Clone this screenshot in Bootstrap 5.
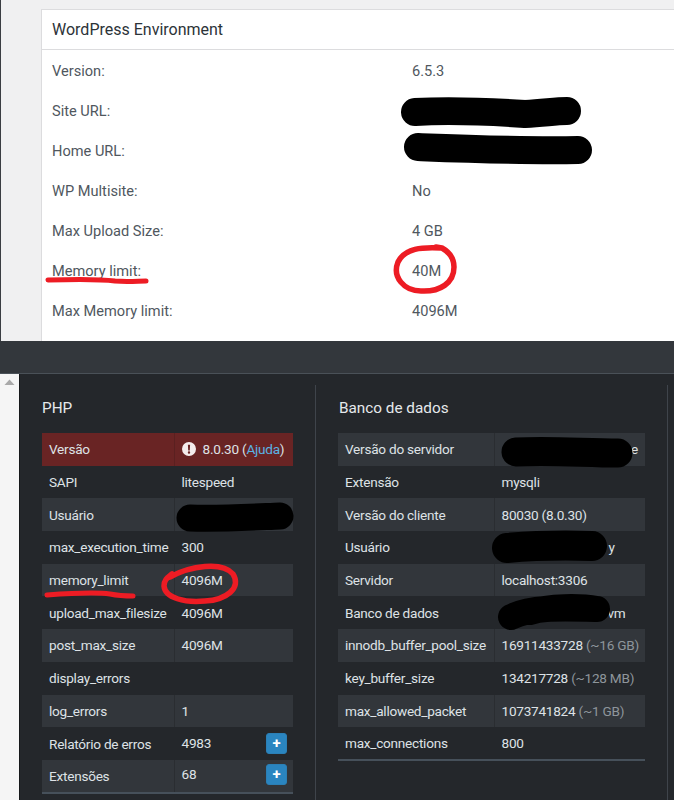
<!DOCTYPE html>
<html lang="pt">
<head>
<meta charset="utf-8">
<title>Environment</title>
<link href="https://cdn.jsdelivr.net/npm/bootstrap@5.3.0/dist/css/bootstrap.min.css" rel="stylesheet">
<style>
html,body{margin:0;height:800px;overflow:hidden;background:#24272b}
body{position:relative;font-family:Roboto,"Open Sans",sans-serif;font-size:14px}
.wp-area{height:341px;background:#f0f0f1;border-left:1px solid #3a3d42;padding:9px 0 0 40px;overflow:hidden}
.wp-box{background:#fff;border:1px solid #dcdcde;border-right:0;height:340px;color:#50575e;font-size:14.6px}
.wp-head{height:40px;border-bottom:1px solid #dcdcde;padding:0 10px;font-size:16px;line-height:39px;color:#2c3338}
.wp-row{height:40px;line-height:40px;padding:1px 0 0 10px}
.wp-key{width:360px}
.gap-band{height:33px;background:#33373c;border-bottom:1px solid #4a5158}
.dark-area{height:426px;background:#24272b;color:#dee2e6}
.scroll-rail{width:20px;background:#f5f5f5;border-right:1px solid #16181a;padding:5px 0 0 4px;line-height:0}
.col-a,.col-b{margin-top:11px;padding-left:22px;height:415px}
.col-a{width:296px;border-right:1px solid #3f444b}
.col-b{width:352px;border-right:1px solid #3f444b}
.sec-title{font-size:15.3px;font-weight:400;line-height:20px;margin:13px 0 15px;color:#e6e9ec}
.col-b .sec-title{padding-left:1px}
.info-table{table-layout:fixed;border-collapse:collapse;color:#dee2e6;font-size:13.6px;letter-spacing:-.25px}
.col-a .info-table{width:251px}
.col-b .info-table{width:307px}
.info-table td{padding:0 7px;height:32.7px;line-height:20px;white-space:nowrap;vertical-align:middle}
.info-table tr:nth-child(odd) td{background:#32363b}
.info-table td:first-child{border-right:1px solid #2a2d31}
.info-table tr:nth-child(even) td:first-child{border-right-color:transparent}
.info-table tr.warn td{background:#692424;border-right-color:#5a2020}
.line-end{border-bottom:2px solid #46505a}
.muted-size{color:#8e959b}
.help-link{color:#5ab4e5;text-decoration:none}
.alert-ico{vertical-align:-2px;margin-right:4px}
.plus-btn{float:right;width:21px;height:21px;padding:0;margin-right:-1px;border:1px solid #2b7fb5;border-radius:3px;background:#2a85c0;color:#fff;font-size:15px;font-weight:700;line-height:18px;text-align:center}
.ink-layer{position:absolute;left:0;top:0;pointer-events:none}
.pad-y{padding-left:114px!important}
.pad-vm{padding-left:113px!important}
.raised-val{display:inline-block;margin-bottom:4px}
</style>
</head>
<body>
<div class="wp-area">
  <div class="wp-box">
    <div class="wp-head">WordPress Environment</div>
    <div class="wp-row d-flex"><div class="wp-key">Version:</div><div>6.5.3</div></div>
    <div class="wp-row d-flex"><div class="wp-key">Site URL:</div><div></div></div>
    <div class="wp-row d-flex"><div class="wp-key">Home URL:</div><div></div></div>
    <div class="wp-row d-flex"><div class="wp-key">WP Multisite:</div><div>No</div></div>
    <div class="wp-row d-flex"><div class="wp-key">Max Upload Size:</div><div>4 GB</div></div>
    <div class="wp-row d-flex"><div class="wp-key">Memory limit:</div><div>40M</div></div>
    <div class="wp-row d-flex"><div class="wp-key">Max Memory limit:</div><div>4096M</div></div>
  </div>
</div>
<div class="gap-band"></div>
<div class="dark-area d-flex">
  <div class="scroll-rail"><svg width="11" height="7" viewBox="0 0 11 7"><path d="M5.5 0.5 L10.5 6 H0.5Z" fill="#a9a9a9"/></svg></div>
  <div class="col-a">
    <h2 class="sec-title">PHP</h2>
    <table class="info-table">
      <colgroup><col style="width:132px"><col></colgroup>
      <tr class="warn"><td>Versão</td><td><svg class="alert-ico" width="14" height="14" viewBox="0 0 14 14"><path fill="#f4ecec" fill-rule="evenodd" d="M7 0a7 7 0 1 0 0 14A7 7 0 0 0 7 0ZM5.9 2.8h2.2L7.8 8.4H6.2ZM7 9.3a1.2 1.2 0 1 1 0 2.4 1.2 1.2 0 0 1 0-2.4Z"/></svg> 8.0.30 (<a class="help-link" href="#">Ajuda</a>)</td></tr>
      <tr><td>SAPI</td><td>litespeed</td></tr>
      <tr><td>Usuário</td><td></td></tr>
      <tr><td>max_execution_time</td><td>300</td></tr>
      <tr><td>memory_limit</td><td>4096M</td></tr>
      <tr><td>upload_max_filesize</td><td>4096M</td></tr>
      <tr><td>post_max_size</td><td>4096M</td></tr>
      <tr><td>display_errors</td><td></td></tr>
      <tr><td>log_errors</td><td>1</td></tr>
      <tr><td>Relatório de erros</td><td>4983<span class="plus-btn">+</span></td></tr>
      <tr class="line-end"><td>Extensões</td><td><span class="raised-val">68</span><span class="plus-btn">+</span></td></tr>
    </table>
  </div>
  <div class="col-b">
    <h2 class="sec-title">Banco de dados</h2>
    <table class="info-table">
      <colgroup><col style="width:156px"><col></colgroup>
      <tr><td>Versão do servidor</td><td class="text-end">e</td></tr>
      <tr><td>Extensão</td><td>mysqli</td></tr>
      <tr><td>Versão do cliente</td><td>80030 (8.0.30)</td></tr>
      <tr><td>Usuário</td><td class="pad-y">y</td></tr>
      <tr><td>Servidor</td><td>localhost:3306</td></tr>
      <tr><td>Banco de dados</td><td class="pad-vm">vm</td></tr>
      <tr><td>innodb_buffer_pool_size</td><td>16911433728 <span class="muted-size">(~16 GB)</span></td></tr>
      <tr><td>key_buffer_size</td><td>134217728 <span class="muted-size">(~128 MB)</span></td></tr>
      <tr><td>max_allowed_packet</td><td>1073741824 <span class="muted-size">(~1 GB)</span></td></tr>
      <tr class="line-end"><td>max_connections</td><td>800</td></tr>
    </table>
  </div>
</div>
<svg class="ink-layer" width="674" height="800" viewBox="0 0 674 800" fill="none" stroke-linecap="round" stroke-linejoin="round">
  <g stroke="#000">
    <path stroke-width="28" d="M415 112 C450 110 480 111 525 114 C545 113 555 111 567 111"/>
    <path stroke-width="28" d="M418 147 C470 149 520 151 578 150"/>
    <path stroke-width="27" d="M190 518 C220 519 255 517 280 516"/>
    <path stroke-width="29" d="M516 452 C550 450 585 453 618 453"/>
    <path stroke-width="30" d="M507 548 C530 546 560 545 592 546"/>
    <path stroke-width="26" d="M511 617 C530 607 560 608 597 609 M530 612 C550 606 580 606 597 609"/>
  </g>
  <g stroke="#ed1c24">
    <path stroke-width="5.5" d="M441 248 C422 247 405 248 398 262 C392 277 404 291 421 291 C440 292 454 283 454 267 C454 258 449 252 442 248 L436 247"/>
    <path stroke-width="5" d="M48 280 C80 279 100 279 115 281 C128 282 138 281 146 281"/>
    <path stroke-width="5.5" d="M170 577 C190 566 222 561 233 574 C242 588 226 600 205 601 C185 603 165 598 164 586 C164 580 167 578 172 574"/>
    <path stroke-width="5" d="M47 595 C75 593 95 592 110 594 C120 596 126 596 133 596"/>
  </g>
</svg>
</body>
</html>
